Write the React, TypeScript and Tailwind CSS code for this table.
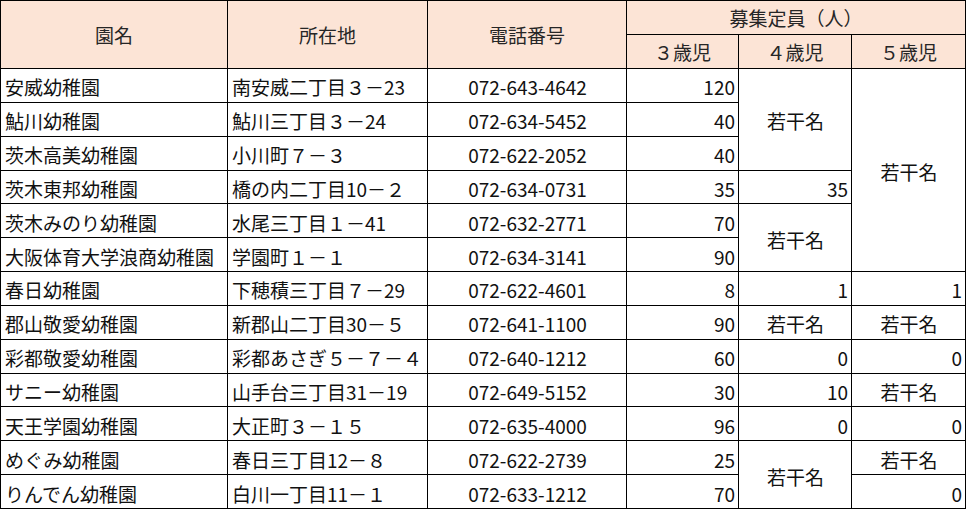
import React from 'react';

type Cell = { v: string; span?: number; align?: 'c' | 'r' };

interface Row {
    name: string;
    addr: string;
    tel: string;
    age3: string;
    age4?: Cell;
    age5?: Cell;
}

// 4歳児・5歳児は結合セルあり（span = 行数）
const rows: Row[] = [
    { name: '安威幼稚園', addr: '南安威二丁目３－23', tel: '072-643-4642', age3: '120', age4: { v: '若干名', span: 3, align: 'c' }, age5: { v: '若干名', span: 6, align: 'c' } },
    { name: '鮎川幼稚園', addr: '鮎川三丁目３－24', tel: '072-634-5452', age3: '40' },
    { name: '茨木高美幼稚園', addr: '小川町７－３', tel: '072-622-2052', age3: '40' },
    { name: '茨木東邦幼稚園', addr: '橋の内二丁目10－２', tel: '072-634-0731', age3: '35', age4: { v: '35', align: 'r' } },
    { name: '茨木みのり幼稚園', addr: '水尾三丁目１－41', tel: '072-632-2771', age3: '70', age4: { v: '若干名', span: 2, align: 'c' } },
    { name: '大阪体育大学浪商幼稚園', addr: '学園町１－１', tel: '072-634-3141', age3: '90' },
    { name: '春日幼稚園', addr: '下穂積三丁目７－29', tel: '072-622-4601', age3: '8', age4: { v: '1', align: 'r' }, age5: { v: '1', align: 'r' } },
    { name: '郡山敬愛幼稚園', addr: '新郡山二丁目30－５', tel: '072-641-1100', age3: '90', age4: { v: '若干名', align: 'c' }, age5: { v: '若干名', align: 'c' } },
    { name: '彩都敬愛幼稚園', addr: '彩都あさぎ５－７－４', tel: '072-640-1212', age3: '60', age4: { v: '0', align: 'r' }, age5: { v: '0', align: 'r' } },
    { name: 'サニー幼稚園', addr: '山手台三丁目31－19', tel: '072-649-5152', age3: '30', age4: { v: '10', align: 'r' }, age5: { v: '若干名', align: 'c' } },
    { name: '天王学園幼稚園', addr: '大正町３－１５', tel: '072-635-4000', age3: '96', age4: { v: '0', align: 'r' }, age5: { v: '0', align: 'r' } },
    { name: 'めぐみ幼稚園', addr: '春日三丁目12－８', tel: '072-622-2739', age3: '25', age4: { v: '若干名', span: 2, align: 'c' }, age5: { v: '若干名', align: 'c' } },
    { name: 'りんでん幼稚園', addr: '白川一丁目11－１', tel: '072-633-1212', age3: '70', age5: { v: '0', align: 'r' } },
];

const td = 'border border-black pl-[4px] pr-[3px] pt-[3px] leading-none whitespace-nowrap';
const th = 'border border-black bg-[#fce4d6] text-[#262626] font-normal text-center leading-none';

const CellTd: React.FC<{ c: Cell }> = ({ c }) => (
    <td rowSpan={c.span} className={`${td} ${c.align === 'c' ? 'text-center' : 'text-right'}`}>
        {c.v}
    </td>
);

const App: React.FC = () => {
    return (
        <div className="w-[966px] h-[511px] bg-white overflow-hidden text-[#111] text-[19px]" style={{ fontFamily: '"Noto Sans CJK JP", "Noto Sans", sans-serif' }}>
            <table className="table-fixed border-collapse w-[965px]">
                <colgroup>
                    <col className="w-[227px]" />
                    <col className="w-[200px]" />
                    <col className="w-[199px]" />
                    <col className="w-[112px]" />
                    <col className="w-[113px]" />
                    <col className="w-[114px]" />
                </colgroup>
                <thead>
                    <tr className="h-[34px]">
                        <th rowSpan={2} className={th}>園名</th>
                        <th rowSpan={2} className={th}>所在地</th>
                        <th rowSpan={2} className={th}>電話番号</th>
                        <th colSpan={3} className={th}>募集定員（人）</th>
                    </tr>
                    <tr className="h-[34px]">
                        <th className={th}>３歳児</th>
                        <th className={th}>４歳児</th>
                        <th className={th}>５歳児</th>
                    </tr>
                </thead>
                <tbody>
                    {rows.map((r) => (
                        <tr key={r.name} className="h-[33.85px]">
                            <td className={td}>{r.name}</td>
                            <td className={td}>{r.addr}</td>
                            <td className={`${td} text-center`}>{r.tel}</td>
                            <td className={`${td} text-right`}>{r.age3}</td>
                            {r.age4 && <CellTd c={r.age4} />}
                            {r.age5 && <CellTd c={r.age5} />}
                        </tr>
                    ))}
                </tbody>
            </table>
        </div>
    );
};

export default App;
